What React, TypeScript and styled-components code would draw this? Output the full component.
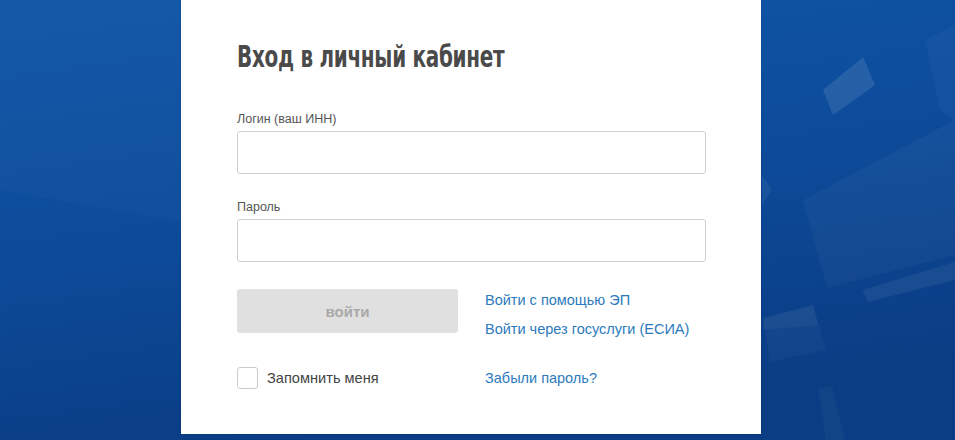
import { FC } from 'react';
import styled, { createGlobalStyle } from 'styled-components';

const GlobalStyle = createGlobalStyle`
	html, body {
		margin: 0;
		padding: 0;
		height: 100%;
		overflow: hidden;
	}
	body {
		font-family: 'Liberation Sans', Arial, sans-serif;
	}
	#root {
		height: 100%;
	}
`;

const Backdrop: FC = () => (
	<Decor viewBox='0 0 955 440' preserveAspectRatio='none'>
		<defs>
			<linearGradient id='bg' x1='0' y1='0' x2='0.3' y2='1'>
				<stop offset='0' stopColor='#1056a8' />
				<stop offset='0.5' stopColor='#0d4c9b' />
				<stop offset='1' stopColor='#0a3d84' />
			</linearGradient>
		</defs>
		<rect width='955' height='440' fill='url(#bg)' />
		{/* left side: soft diagonal split */}
		<polygon points='0,0 181,0 181,222 0,190' fill='#ffffff' opacity='0.02' />
		{/* right side: translucent tiles */}
		<polygon points='823,90 863,57 875,85 833,115' fill='#ffffff' opacity='0.1' />
		<polygon points='925,40 955,25 955,120 940,110' fill='#ffffff' opacity='0.03' />
		<polygon points='803,200 955,120 955,255 827,288' fill='#ffffff' opacity='0.035' />
		<polygon points='862,290 955,262 955,280 868,302' fill='#ffffff' opacity='0.06' />
		<polygon points='763,318 813,305 826,350 770,362' fill='#ffffff' opacity='0.035' />
		<polygon points='763,318 813,305 818,325 763,330' fill='#ffffff' opacity='0.04' />
		<polygon points='818,388 832,386 845,440 826,440' fill='#ffffff' opacity='0.03' />
		<polygon points='762,175 772,190 762,205' fill='#ffffff' opacity='0.06' />
	</Decor>
);

const App: FC = () => (
	<>
		<GlobalStyle />
		<Page>
			<Backdrop />
			<Card>
				<Title>Вход в личный кабинет</Title>
				<Field>
					<Label htmlFor='login'>Логин (ваш ИНН)</Label>
					<Input id='login' type='text' />
				</Field>
				<Field>
					<Label htmlFor='password'>Пароль</Label>
					<Input id='password' type='password' />
				</Field>
				<Actions>
					<SubmitButton type='button' disabled>
						войти
					</SubmitButton>
					<Links>
						<LinkText href='#'>Войти с помощью ЭП</LinkText>
						<LinkText href='#'>Войти через госуслуги (ЕСИА)</LinkText>
					</Links>
				</Actions>
				<Footer>
					<Remember>
						<Checkbox type='checkbox' />
						<span>Запомнить меня</span>
					</Remember>
					<LinkText href='#'>Забыли пароль?</LinkText>
				</Footer>
			</Card>
		</Page>
	</>
);

const Page = styled.div`
	position: relative;
	width: 955px;
	height: 440px;
	overflow: hidden;
	display: flex;
	justify-content: flex-start;
	align-items: flex-start;
	padding-left: 181px;
	box-sizing: border-box;
`;

const Decor = styled.svg`
	position: absolute;
	inset: 0;
	width: 100%;
	height: 100%;
`;

const Card = styled.div`
	position: relative;
	width: 580px;
	height: 434px;
	box-sizing: border-box;
	background: #ffffff;
	padding: 40px 55px 0 56px;
	display: flex;
	flex-direction: column;
	box-shadow: 0 0 2px rgba(0, 0, 0, 0.2);
`;

const Title = styled.h1`
	margin: 0 0 38px;
	align-self: flex-start;
	font-family: 'DejaVu Sans Condensed', 'DejaVu Sans', sans-serif;
	font-stretch: condensed;
	font-weight: 700;
	font-size: 30px;
	line-height: 34px;
	letter-spacing: -0.4px;
	color: #4a4a4a;
	white-space: nowrap;
	transform: scaleX(0.74);
	transform-origin: left center;
`;

const Field = styled.div`
	display: flex;
	flex-direction: column;
	gap: 4px;
	margin-bottom: 26px;
`;

const Label = styled.label`
	font-size: 12.5px;
	line-height: 15px;
	color: #555555;
`;

const Input = styled.input`
	height: 43px;
	box-sizing: border-box;
	border: 1px solid #cfcfcf;
	border-radius: 3px;
	padding: 0 12px;
	font-size: 15px;
	font-family: inherit;
	outline: none;
`;

const Actions = styled.div`
	display: grid;
	grid-template-columns: 221px 1fr;
	column-gap: 27px;
	margin-top: 1px;
`;

const SubmitButton = styled.button`
	height: 44px;
	border: none;
	border-radius: 3px;
	background: #e0e0e0;
	color: #a9a9a9;
	font-family: inherit;
	font-weight: 700;
	font-size: 15px;
	cursor: default;
`;

const Links = styled.div`
	display: flex;
	flex-direction: column;
	gap: 11px;
	padding-top: 2px;
`;

const LinkText = styled.a`
	font-size: 14.5px;
	line-height: 18px;
	color: #2c7bbd;
	text-decoration: none;
`;

const Footer = styled.div`
	display: grid;
	grid-template-columns: 221px 1fr;
	column-gap: 27px;
	align-items: center;
	margin-top: 29px;
`;

const Remember = styled.label`
	display: flex;
	align-items: center;
	gap: 9px;
	font-size: 14.6px;
	color: #444444;
`;

const Checkbox = styled.input`
	appearance: none;
	margin: 0;
	width: 21px;
	height: 22px;
	border: 1px solid #cccccc;
	border-radius: 3px;
	background: #ffffff;
`;

export default App;
